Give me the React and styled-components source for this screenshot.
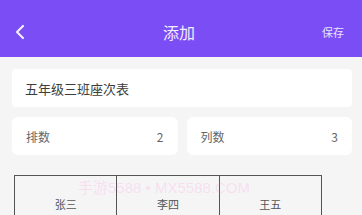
import React from "react";
import styled, { createGlobalStyle } from "styled-components";

const GlobalStyle = createGlobalStyle`
  html, body {
    margin: 0;
    padding: 0;
    background: #f5f5f5;
    font-family: "Noto Sans CJK SC", "Noto Sans", sans-serif;
  }
`;

const Page = styled.div`
  position: relative;
  width: 362px;
  height: 215px;
  overflow: hidden;
  background: #f5f5f5;
`;

const NavBar = styled.div`
  height: 57px;
  background: #7a4df5;
  display: flex;
  align-items: center;
  justify-content: space-between;
  padding: 7px 18px 0 14px;
  box-sizing: border-box;
  color: #fff;
`;

const Back = styled.div`
  width: 40px;
  display: flex;
  align-items: center;
`;

const Title = styled.div`
  font-size: 16px;
  color: #f3eefe;
`;

const Save = styled.div`
  width: 40px;
  text-align: right;
  font-size: 11px;
  color: #ece4fd;
`;

const Body = styled.div`
  padding: 12px 10px 0 12px;
  display: flex;
  flex-direction: column;
`;

const NameCard = styled.div`
  height: 38px;
  background: #fff;
  border-radius: 4px;
  display: flex;
  align-items: center;
  padding: 0 13px;
  font-size: 13px;
  color: #3c3c3c;
`;

const Counts = styled.div`
  display: grid;
  grid-template-columns: 1fr 1fr;
  gap: 9px;
  margin-top: 10px;
`;

const CountCard = styled.div`
  height: 38px;
  background: #fff;
  border-radius: 6px;
  display: flex;
  align-items: center;
  justify-content: space-between;
  padding: 0 14px;
  font-size: 12px;
  color: #666;
`;

const Grid = styled.div`
  margin-top: 20px;
  margin-left: 2px;
  width: 307px;
  display: grid;
  grid-template-columns: repeat(3, 1fr);
  border-top: 1px solid #555;
  border-left: 1px solid #555;
`;

const Cell = styled.div`
  height: 56px;
  border-right: 1px solid #555;
  border-bottom: 1px solid #555;
  display: flex;
  align-items: center;
  justify-content: center;
  font-size: 11px;
  color: #555;
`;

const Watermark = styled.div`
  position: absolute;
  left: 78px;
  top: 179px;
  font-family: "Liberation Sans", "Noto Sans CJK SC", sans-serif;
  font-size: 15px;
  line-height: 18px;
  color: rgba(255, 140, 220, 0.22);
  white-space: nowrap;
  pointer-events: none;
`;

const seats = ["张三", "李四", "王五", "", "", ""];

export default function App() {
  return (
    <Page>
      <GlobalStyle />
      <NavBar>
        <Back>
          <svg width="12" height="16" viewBox="0 0 12 16">
            <path d="M9 2 L3 8 L9 14" fill="none" stroke="#f1ebfe" strokeWidth="2.2" strokeLinecap="round" strokeLinejoin="round" />
          </svg>
        </Back>
        <Title>添加</Title>
        <Save>保存</Save>
      </NavBar>
      <Body>
        <NameCard>五年级三班座次表</NameCard>
        <Counts>
          <CountCard>
            <span>排数</span>
            <span>2</span>
          </CountCard>
          <CountCard>
            <span>列数</span>
            <span>3</span>
          </CountCard>
        </Counts>
        <Grid>
          {seats.map((s, i) => (
            <Cell key={i}>{s}</Cell>
          ))}
        </Grid>
      </Body>
      <Watermark>手游5588 • MX5588.COM</Watermark>
    </Page>
  );
}
